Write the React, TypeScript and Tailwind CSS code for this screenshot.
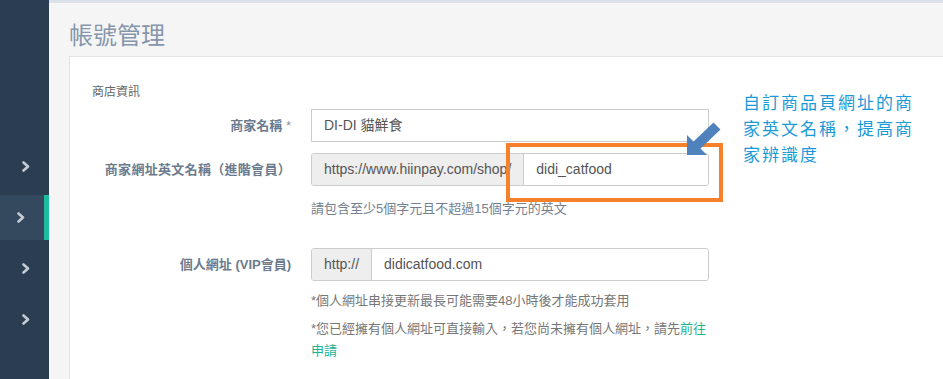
const FONT = "font-['Liberation_Sans','Noto_Sans_CJK_TC',sans-serif]";

function Chevron() {
  return (
    <svg width="8" height="11" viewBox="0 0 8 11" fill="none">
      <path d="M1.5 1.5 L6 5.5 L1.5 9.5" stroke="#c3cbd5" strokeWidth="2.6" strokeLinecap="round" strokeLinejoin="round" />
    </svg>
  );
}

function SideItem({ active }: { active?: boolean }) {
  return (
    <div
      className={`h-[45px] flex items-center ${
        active ? "bg-[#34495e] pl-[17px] border-r-[5px] border-[#1abc9c]" : "pl-[22px]"
      }`}
    >
      <Chevron />
    </div>
  );
}

export default function App() {
  return (
    <div className={`relative flex h-screen overflow-hidden ${FONT}`}>
      {/* Sidebar */}
      <aside className="w-[49px] shrink-0 bg-[#2b3e51] pt-[144px] flex flex-col gap-[6px]">
        <SideItem />
        <SideItem active />
        <SideItem />
        <SideItem />
      </aside>

      {/* Main */}
      <main className="flex-1 bg-[#f5f5f5] border-t-[3px] border-[#dbe2ea] pl-5">
        <h1 className="pt-[18px] text-[24px] leading-[30px] text-[#8696ab] font-normal">帳號管理</h1>
        <section className="mt-[5px] -mr-5 h-[400px] bg-white border border-[#e4e4e4] px-[22px]">
          <p className="pt-[26px] text-[12px] leading-[18px] text-[#666]">商店資訊</p>

          {/* 商家名稱 */}
          <div className="mt-[8px] flex items-center gap-5">
            <label className="w-[199px] text-right text-[13px] font-bold text-[#6b7b8f]">
              商家名稱 <span className="font-normal text-[#8a96a6]">*</span>
            </label>
            <div className="w-[398px] h-[33px] border border-[#cccccc] flex items-center px-3 text-[14px] text-[#555]">
              DI-DI 貓鮮食
            </div>
          </div>

          {/* 商家網址英文名稱 */}
          <div className="mt-[11px] flex items-center gap-5">
            <label className="w-[199px] text-right text-[13px] font-bold text-[#6b7b8f] whitespace-nowrap tracking-[0.3px]">
              商家網址英文名稱（進階會員）
            </label>
            <div className="w-[398px] h-[33px] flex rounded-[3px] border border-[#cccccc] overflow-hidden text-[14px] text-[#555]">
              <span className="flex items-center px-3 bg-[#eeeeee] border-r border-[#cccccc] whitespace-nowrap">
                https://www.hiinpay.com/shop/
              </span>
              <span className="flex-1 flex items-center px-3 bg-white">didi_catfood</span>
            </div>
          </div>
          <p className="mt-[13px] ml-[219px] text-[13px] leading-[20px] text-[#737f8f]">
            請包含至少5個字元且不超過15個字元的英文
          </p>

          {/* 個人網址 */}
          <div className="mt-[29px] flex items-center gap-5">
            <label className="w-[199px] text-right text-[13px] font-bold text-[#6b7b8f]">
              個人網址 (VIP會員)
            </label>
            <div className="w-[398px] h-[33px] flex rounded-[3px] border border-[#cccccc] overflow-hidden text-[14px] text-[#555]">
              <span className="flex items-center px-3 bg-[#eeeeee] border-r border-[#cccccc]">http://</span>
              <span className="flex-1 flex items-center px-3 bg-white">didicatfood.com</span>
            </div>
          </div>
          <div className="ml-[219px] w-[398px] text-[13px] text-[#777]">
            <p className="mt-[10px] leading-[20px]">*個人網址串接更新最長可能需要48小時後才能成功套用</p>
            <p className="mt-[7px] leading-[22px]">
              *您已經擁有個人網址可直接輸入，若您尚未擁有個人網址，請先
              <a className="text-[#1ab394]">
                前往
                <br />
                申請
              </a>
            </p>
          </div>
        </section>
      </main>

      {/* Annotation overlay */}
      <div className="absolute left-[506px] top-[143px] w-[217px] h-[59px] border-4 border-[#f7802a]" />
      <svg className="absolute left-[684px] top-[121px]" width="40" height="40" viewBox="0 0 40 40">
        <polygon points="3,34 3,14 9.5,20.5 29.5,1.5 36.5,8.5 16.5,27.5 23,34" fill="#4f81bd" />
      </svg>
      <div className="absolute left-[743px] top-[91px] text-[17px] leading-[26px] tracking-[2px] text-[#1b9ad8]">
        <p>自訂商品頁網址的商</p>
        <p>家英文名稱，提高商</p>
        <p>家辨識度</p>
      </div>
    </div>
  );
}
